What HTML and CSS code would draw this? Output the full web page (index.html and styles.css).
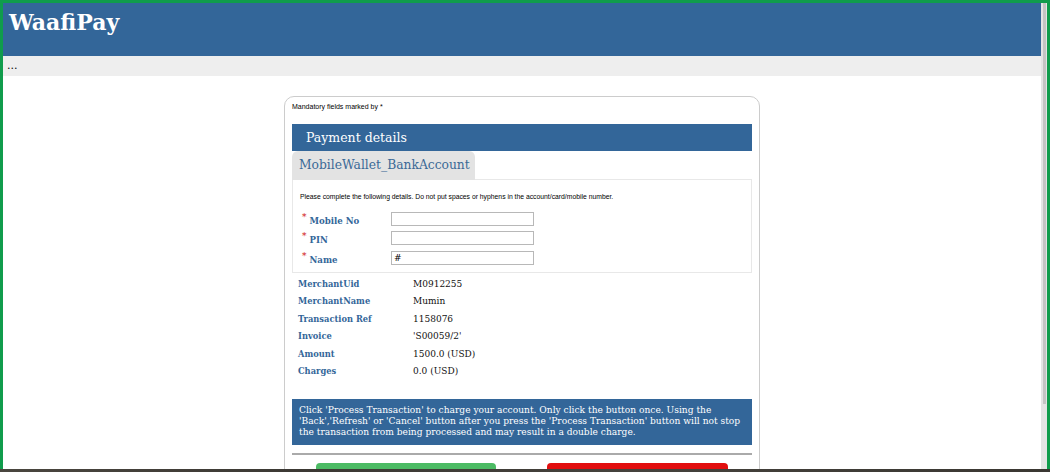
FILE: index.html
```html
<!DOCTYPE html>
<html>
<head>
<meta charset="utf-8">
<title>WaafiPay</title>
<link rel="stylesheet" href="styles.css">
</head>
<body>
<div class="frame">
  <div class="window">
    <div class="viewport">
      <header class="topbar"><h1 class="brand">WaafiPay</h1></header>
      <nav class="navbar"><span class="dots">...</span></nav>
      <main class="content">
        <section class="card">
          <p class="mandatory">Mandatory fields marked by *</p>
          <div class="section-bar">Payment details</div>
          <div class="tabs"><span class="tab">MobileWallet_BankAccount</span></div>
          <div class="panel">
            <p class="hint">Please complete the following details. Do not put spaces or hyphens in the account/card/mobile number.</p>
            <div class="form-row"><label class="flabel"><sup class="req">*</sup> Mobile No</label><input class="finput" type="text"></div>
            <div class="form-row"><label class="flabel"><sup class="req">*</sup> PIN</label><input class="finput" type="password"></div>
            <div class="form-row"><label class="flabel"><sup class="req">*</sup> Name</label><input class="finput" type="text" value="#"></div>
          </div>
          <div class="details">
            <div class="drow"><span class="dlabel">MerchantUid</span><span class="dval">M0912255</span></div>
            <div class="drow"><span class="dlabel">MerchantName</span><span class="dval">Mumin</span></div>
            <div class="drow"><span class="dlabel">Transaction Ref</span><span class="dval">1158076</span></div>
            <div class="drow"><span class="dlabel">Invoice</span><span class="dval">'S00059/2'</span></div>
            <div class="drow"><span class="dlabel">Amount</span><span class="dval">1500.0 (USD)</span></div>
            <div class="drow"><span class="dlabel">Charges</span><span class="dval">0.0 (USD)</span></div>
          </div>
          <div class="notice">Click 'Process Transaction' to charge your account. Only click the button once. Using the 'Back','Refresh' or 'Cancel' button after you press the 'Process Transaction' button will not stop the transaction from being processed and may result in a double charge.</div>
          <hr class="divider">
          <div class="actions">
            <button class="btn btn-ok" type="button">Process Transaction</button>
            <button class="btn btn-cancel" type="button">Cancel</button>
          </div>
        </section>
      </main>
    </div>
    <div class="scrollbar"><div class="thumb"></div></div>
  </div>
  <div class="taskbar"></div>
</div>
</body>
</html>
```

FILE: styles.css
```css
html, body {
  margin: 0;
  padding: 0;
  height: 472px;
  overflow: hidden;
}
body {
  background: #109c4c;
  font-family: "DejaVu Serif", serif;
}
.frame {
  display: flex;
  flex-direction: column;
  height: 472px;
}
.window {
  display: flex;
  margin: 3px 3px 0 3px;
  height: 466px;
  background: #fff;
}
.viewport {
  flex: 1;
  overflow: hidden;
  background: #fff;
}
.scrollbar {
  width: 6px;
  background: #e4e4e4;
  display: flex;
  justify-content: center;
}
.thumb {
  width: 3px;
  height: 401px;
  background: #c4c4c4;
}
.taskbar {
  height: 3px;
  background: linear-gradient(90deg, #4a463f, #3b3833 30%, #45423c 60%, #3a3732);
}
.topbar {
  background: #336699;
  height: 53px;
}
.brand {
  margin: 0;
  padding: 6px 0 0 6px;
  font-family: "DejaVu Serif", serif;
  font-weight: bold;
  font-size: 22px;
  line-height: 26px;
  color: #fff;
}
.navbar {
  background: #eeeeee;
  height: 20px;
  line-height: 20px;
  padding-left: 4px;
  font-family: "DejaVu Serif", serif;
  font-size: 11px;
}
.dots {
  color: #111111;
}
.content {
  padding-top: 20px;
  display: flex;
  justify-content: center;
}
.card {
  border: 1px solid #cccccc;
  border-radius: 10px;
  padding: 0 7px 40px 7px;
  box-sizing: content-box;
  width: 460px;
}
.mandatory {
  margin: 0;
  padding: 6px 0 0 0;
  height: 21px;
  font-family: "Liberation Sans", Arial, sans-serif;
  font-size: 7px;
  line-height: 8px;
  color: #000;
}
.section-bar {
  background: #336699;
  color: #fff;
  height: 27px;
  line-height: 27px;
  padding-left: 14px;
  font-size: 12.5px;
}
.tabs {
  display: flex;
  position: relative;
  z-index: 1;
}
.tab {
  background: #e3e3e3;
  color: #3a6996;
  font-size: 12.3px;
  height: 29px;
  line-height: 29px;
  width: 176px;
  padding: 0 0 0 7px;
  white-space: nowrap;
  border-radius: 6px 6px 0 0;
}
.panel {
  border: 1px solid #e8e8e8;
  margin-top: -1px;
  height: 92px;
  padding: 0 0 0 7px;
}
.hint {
  margin: 0;
  padding: 13px 0 0 0;
  height: 16px;
  font-family: "Liberation Sans", Arial, sans-serif;
  font-size: 6.8px;
  line-height: 8px;
  color: #000;
}
.form-row {
  display: flex;
  align-items: center;
  height: 19.5px;
}
.flabel {
  width: 89px;
  padding-left: 2px;
  font-weight: bold;
  font-size: 8.6px;
  color: #336699;
  padding-top: 4px;
}
.req {
  color: #d01010;
  font-size: 9px;
  font-weight: normal;
  vertical-align: 4px;
  line-height: 0;
}
.finput {
  width: 143px;
  height: 14px;
  box-sizing: border-box;
  border: 1px solid #b8b8b8;
  margin: 0;
  padding: 0 2px;
  font-family: "DejaVu Sans", sans-serif;
  font-size: 9px;
  color: #000;
  background: #fff;
}
.details {
  padding: 2px 0 0 6px;
  height: 124px;
}
.drow {
  display: flex;
  height: 17.5px;
  align-items: center;
  font-size: 9px;
}
.dlabel {
  width: 115px;
  font-weight: bold;
  color: #336699;
  font-size: 8.3px;
}
.dval {
  color: #111;
}
.notice {
  background: #336699;
  color: #fff;
  font-size: 9.1px;
  line-height: 11px;
  padding: 6px 7px 6px 7px;
  height: 34px;
}
.divider {
  border: 0;
  height: 2px;
  background: #aaaaaa;
  margin: 8px 0 0 0;
}
.actions {
  display: flex;
  padding: 8px 0 0 24px;
  gap: 51px;
}
.btn {
  width: 180px;
  height: 44px;
  border: 0;
  border-radius: 4px;
  color: #fff;
  font-family: "DejaVu Serif", serif;
  font-size: 12px;
}
.btn-ok {
  background: #4cbb64;
}
.btn-cancel {
  background: #e10e0e;
  width: 181px;
}
```
